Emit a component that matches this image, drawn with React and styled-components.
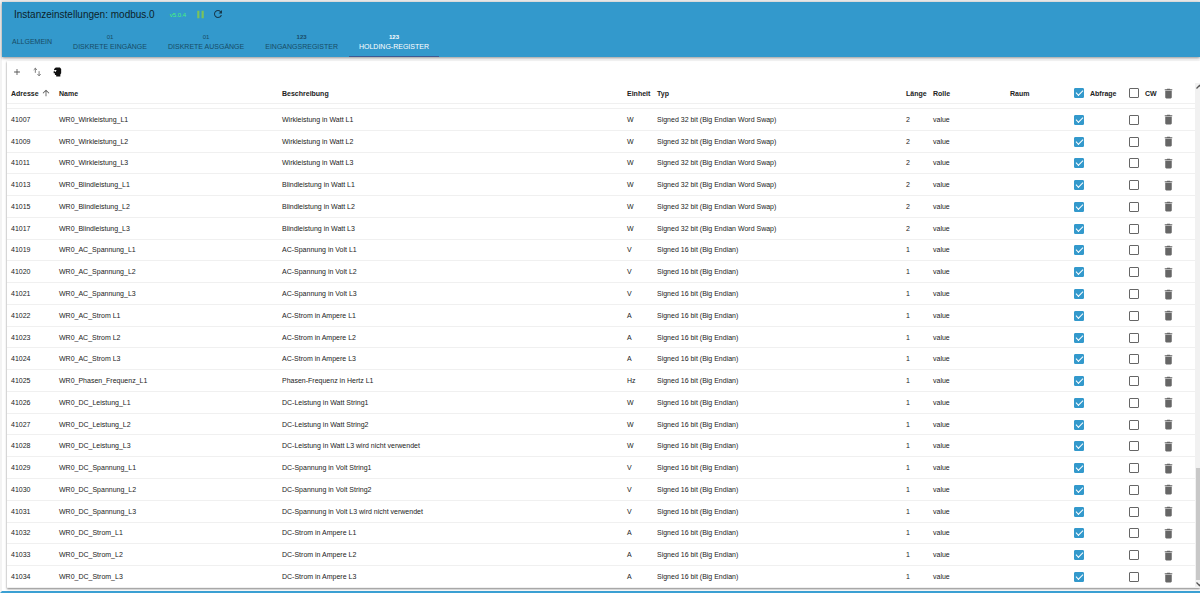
import React, { useState } from 'react'
import styled, { createGlobalStyle } from 'styled-components';
import { MdAdd, MdArrowUpward, MdDelete, MdPause, MdRefresh } from 'react-icons/md';

const GlobalStyle = createGlobalStyle`
    * {
        box-sizing: border-box;
    }

    body {
        margin: 0;
        background-color: #fff;
        color: #222;
        font-family: "Liberation Sans", Arial, sans-serif;
        font-size: 7px;
    }

    button {
        display: inline-flex;
        align-items: center;
        justify-content: center;
        padding: 0;
        border: none;
        background: none;
        color: inherit;
        font: inherit;
        cursor: pointer;
    }
`

const Page = styled.div`
    height: 100vh;
    display: flex;
    flex-direction: column;
    border-top: 2px solid #ececec;
    border-left: 2px solid #f3f3f3;
    border-bottom: 2px solid #3ba0d3;
`

const AppHeader = styled.header`
    flex: none;
    background-color: #3399cc;
    color: #17384a;
    box-shadow: 0 1px 3px rgba(0, 0, 0, 0.45);
    z-index: 1;
`

const TitleBar = styled.div`
    height: 24px;
    display: flex;
    align-items: center;
    padding-left: 12px;
`

const Title = styled.h1`
    margin: 0;
    font-size: 10px;
    font-weight: 400;
    color: #0c1f2a;
`

const Version = styled.span`
    margin: 2px 8px 0 15px;
    font-size: 6px;
    color: #4bf37b;
`

const PauseButton = styled.button`
    margin-right: 5px;
    color: #7cc35a;
`

const Tabs = styled.nav`
    height: 31px;
    display: flex;
    gap: 1px;
`

const Tab = styled.button`
    flex-direction: column;
    padding: 1px 10px 0 !important;
    line-height: 9px !important;
    color: ${props => props.$active ? '#fff' : '#184c66'} !important;
    border-bottom: 1px solid ${props => props.$active ? '#3b5a94' : 'transparent'} !important;
    white-space: nowrap;
`

const TabLabel = styled.span`
    font-size: 7px;
    text-transform: uppercase;
`

const TabMark = styled.span`
    font-size: 6px;
    font-weight: ${props => props.$bold ? 700 : 400};
`

const Card = styled.main`
    flex: 1;
    min-height: 0;
    display: flex;
    flex-direction: column;
    margin: 4px 0 3px 5px;
    box-shadow: 0 1px 2px rgba(0, 0, 0, 0.5);
`

const Toolbar = styled.div`
    height: 22px;
    flex: none;
    display: flex;
    align-items: center;
    gap: 10px;
    padding-left: 5px;
    color: #555;

    > button {
        width: 10px;
        height: 10px;
    }
`

const TableArea = styled.div`
    flex: 1;
    min-height: 0;
    display: flex;
`

const TableWrap = styled.div`
    flex: 1;
    min-width: 0;
`

const Table = styled.table`
    width: 100%;
    height: 100%;
    table-layout: fixed;
    border-collapse: separate;
    border-spacing: 0;
`

const HeadCell = styled.th`
    height: 21px;
    padding: 0 4px;
    border-bottom: 1px solid #f0f0f0;
    text-align: left;
    font-weight: 700;
    white-space: nowrap;
`

const HeadContent = styled.div`
    display: flex;
    align-items: center;
    gap: ${props => props.$gap || 2}px;

    > svg {
        flex: none;
    }
`

const Cell = styled.td`
    padding: 1px 4px 0;
    border-bottom: 1px solid #f0f0f0;
    white-space: nowrap;
    line-height: 10px;
`

const HiddenRowEdge = styled.td`
    height: 5px;
    padding: 0;
    border-bottom: 1px solid #f0f0f0;
`

const Checkbox = styled.input`
    appearance: none;
    display: block;
    flex: none;
    width: 10px;
    height: 10px;
    margin: 0;
    border: 1px solid #666;
    border-radius: 1px;
    cursor: pointer;

    &:checked {
        border-color: #3399cc;
        background-color: #3399cc;
    }

    &:checked::after {
        content: '';
        display: block;
        width: 6px;
        height: 3px;
        margin: 1px;
        border-left: 1px solid #fff;
        border-bottom: 1px solid #fff;
        transform: rotate(-45deg);
    }
`

const DeleteButton = styled.button`
    color: #666;
    vertical-align: middle;
`

const ScrollTrack = styled.div`
    flex: none;
    width: 5px;
    display: flex;
    flex-direction: column;
    align-items: flex-start;
    background-color: #f1f1f1;
    overflow: hidden;

    > svg {
        flex: none;
    }
`

const ScrollSpace = styled.div`
    flex: 77;
`

const ScrollThumb = styled.div`
    flex: 23;
    width: 100%;
    margin-left: 1px;
    background-color: #c8c8c8;
`

const SwapIcon = () => (
    <svg width="12" height="12" viewBox="0 0 24 24" fill="none" stroke="currentColor" strokeWidth="1.800">
        <path d="M8 14V3M4 7l4-4 4 4M17 10v11M13 17l4 4 4-4" />
    </svg>
)

const HeadIcon = () => (
    <svg width="12" height="12" viewBox="0 0 24 24">
        <path fill="#111" d="M9 1h10l3 4v10l-2 3v5H10v-4H7v-4H4v-4l1-2V5z" />
        <path fill="#fff" d="M7 7h3l1 2-2 1v2H7V10H5V8z" />
    </svg>
)

const ScrollArrow = ({ up }) => (
    <svg width="8" height="8" viewBox="0 0 8 8" fill="none" stroke="#555" strokeWidth="1.300">
        <path d={up ? 'M1.500 5.500 4.500 2.500 7.500 5.500' : 'M1.500 2.500 4.500 5.500 7.500 2.500'} />
    </svg>
)

const tabs = [
    { label: 'Allgemein' },
    { label: 'Diskrete Eingänge', mark: '01' },
    { label: 'Diskrete Ausgänge', mark: '01' },
    { label: 'Eingangsregister', mark: '123' },
    { label: 'Holding-Register', mark: '123' },
]

const WORD_SWAP = 'Signed 32 bit (Big Endian Word Swap)'
const BIG_ENDIAN = 'Signed 16 bit (Big Endian)'

const registers = [
    [41007, 'WR0_Wirkleistung_L1', 'Wirkleistung in Watt L1', 'W', WORD_SWAP, 2],
    [41009, 'WR0_Wirkleistung_L2', 'Wirkleistung in Watt L2', 'W', WORD_SWAP, 2],
    [41011, 'WR0_Wirkleistung_L3', 'Wirkleistung in Watt L3', 'W', WORD_SWAP, 2],
    [41013, 'WR0_Blindleistung_L1', 'Blindleistung in Watt L1', 'W', WORD_SWAP, 2],
    [41015, 'WR0_Blindleistung_L2', 'Blindleistung in Watt L2', 'W', WORD_SWAP, 2],
    [41017, 'WR0_Blindleistung_L3', 'Blindleistung in Watt L3', 'W', WORD_SWAP, 2],
    [41019, 'WR0_AC_Spannung_L1', 'AC-Spannung in Volt L1', 'V', BIG_ENDIAN, 1],
    [41020, 'WR0_AC_Spannung_L2', 'AC-Spannung in Volt L2', 'V', BIG_ENDIAN, 1],
    [41021, 'WR0_AC_Spannung_L3', 'AC-Spannung in Volt L3', 'V', BIG_ENDIAN, 1],
    [41022, 'WR0_AC_Strom L1', 'AC-Strom in Ampere L1', 'A', BIG_ENDIAN, 1],
    [41023, 'WR0_AC_Strom L2', 'AC-Strom in Ampere L2', 'A', BIG_ENDIAN, 1],
    [41024, 'WR0_AC_Strom L3', 'AC-Strom in Ampere L3', 'A', BIG_ENDIAN, 1],
    [41025, 'WR0_Phasen_Frequenz_L1', 'Phasen-Frequenz in Hertz L1', 'Hz', BIG_ENDIAN, 1],
    [41026, 'WR0_DC_Leistung_L1', 'DC-Leistung in Watt String1', 'W', BIG_ENDIAN, 1],
    [41027, 'WR0_DC_Leistung_L2', 'DC-Leistung in Watt String2', 'W', BIG_ENDIAN, 1],
    [41028, 'WR0_DC_Leistung_L3', 'DC-Leistung in Watt L3 wird nicht verwendet', 'W', BIG_ENDIAN, 1],
    [41029, 'WR0_DC_Spannung_L1', 'DC-Spannung in Volt String1', 'V', BIG_ENDIAN, 1],
    [41030, 'WR0_DC_Spannung_L2', 'DC-Spannung in Volt String2', 'V', BIG_ENDIAN, 1],
    [41031, 'WR0_DC_Spannung_L3', 'DC-Spannung in Volt L3 wird nicht verwendet', 'V', BIG_ENDIAN, 1],
    [41032, 'WR0_DC_Strom_L1', 'DC-Strom in Ampere L1', 'A', BIG_ENDIAN, 1],
    [41033, 'WR0_DC_Strom_L2', 'DC-Strom in Ampere L2', 'A', BIG_ENDIAN, 1],
    [41034, 'WR0_DC_Strom_L3', 'DC-Strom in Ampere L3', 'A', BIG_ENDIAN, 1],
]

// the description column takes what is left
const columnWidths = [48, 223, undefined, 30, 249, 27, 77, 64, 55, 33, 37]

function RegisterRow({ register }) {
    const [address, name, description, unit, type, length] = register
    return (
        <tr>
            <Cell>{address}</Cell>
            <Cell>{name}</Cell>
            <Cell>{description}</Cell>
            <Cell>{unit}</Cell>
            <Cell>{type}</Cell>
            <Cell>{length}</Cell>
            <Cell>value</Cell>
            <Cell />
            <Cell><Checkbox type="checkbox" aria-label={`Abfrage ${address}`} defaultChecked /></Cell>
            <Cell><Checkbox type="checkbox" aria-label={`CW ${address}`} /></Cell>
            <Cell><DeleteButton aria-label={`Löschen ${address}`}><MdDelete size={13} /></DeleteButton></Cell>
        </tr>
    )
}

function App() {
    const [activeTab, setActiveTab] = useState('Holding-Register')

    return (
        <Page>
            <GlobalStyle />
            <AppHeader>
                <TitleBar>
                    <Title>Instanzeinstellungen: modbus.0</Title>
                    <Version>v5.0.4</Version>
                    <PauseButton aria-label="Pause"><MdPause size={13} /></PauseButton>
                    <button aria-label="Neu laden"><MdRefresh size={12} /></button>
                </TitleBar>
                <Tabs>
                    {tabs.map(tab => (
                        <Tab key={tab.label} $active={tab.label === activeTab} onClick={() => setActiveTab(tab.label)}>
                            {tab.mark && <TabMark $bold={tab.mark === '123'}>{tab.mark}</TabMark>}
                            <TabLabel>{tab.label}</TabLabel>
                        </Tab>
                    ))}
                </Tabs>
            </AppHeader>
            <Card>
                <Toolbar>
                    <button aria-label="Hinzufügen"><MdAdd size={12} /></button>
                    <button aria-label="Import / Export"><SwapIcon /></button>
                    <button aria-label="Expertenmodus"><HeadIcon /></button>
                </Toolbar>
                <TableArea>
                    <TableWrap>
                        <Table>
                            <colgroup>
                                {columnWidths.map((width, i) => <col key={i} width={width} />)}
                            </colgroup>
                            <thead>
                                <tr>
                                    <HeadCell><HeadContent>Adresse <MdArrowUpward size={10} color="#555" /></HeadContent></HeadCell>
                                    <HeadCell>Name</HeadCell>
                                    <HeadCell>Beschreibung</HeadCell>
                                    <HeadCell>Einheit</HeadCell>
                                    <HeadCell>Typ</HeadCell>
                                    <HeadCell>Länge</HeadCell>
                                    <HeadCell>Rolle</HeadCell>
                                    <HeadCell>Raum</HeadCell>
                                    <HeadCell>
                                        <HeadContent as="label" $gap={6}><Checkbox type="checkbox" defaultChecked />Abfrage</HeadContent>
                                    </HeadCell>
                                    <HeadCell>
                                        <HeadContent as="label" $gap={6}><Checkbox type="checkbox" />CW</HeadContent>
                                    </HeadCell>
                                    <HeadCell><DeleteButton aria-label="Alle löschen"><MdDelete size={13} /></DeleteButton></HeadCell>
                                </tr>
                            </thead>
                            <tbody>
                                <tr><HiddenRowEdge colSpan={11} /></tr>
                                {registers.map(register => <RegisterRow key={register[0]} register={register} />)}
                            </tbody>
                        </Table>
                    </TableWrap>
                    <ScrollTrack>
                        <ScrollArrow up />
                        <ScrollSpace />
                        <ScrollThumb />
                        <ScrollArrow />
                    </ScrollTrack>
                </TableArea>
            </Card>
        </Page>
    )
}

export default App;
